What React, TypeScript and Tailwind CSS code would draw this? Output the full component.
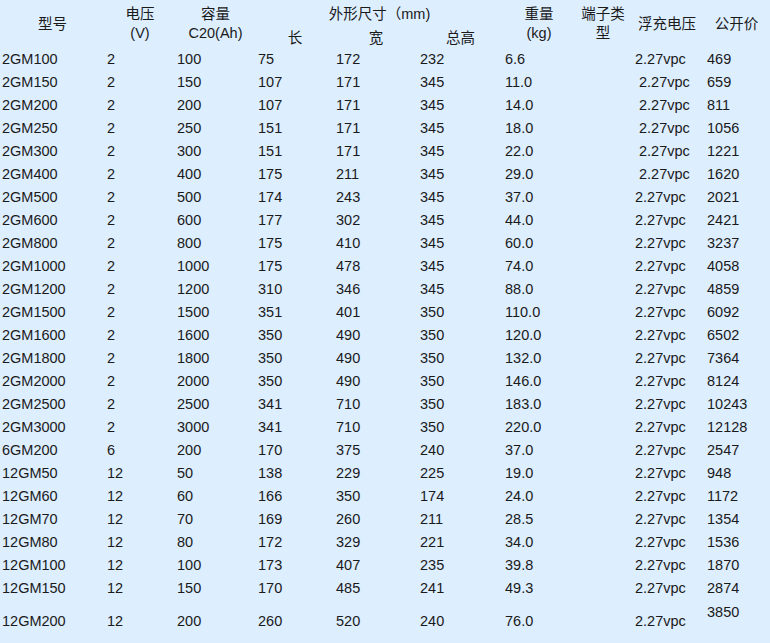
import React from "react";

type Row = [string, string, string, string, string, string, string, string, string, boolean?];

const rows: Row[] = [
  ["2GM100", "2", "100", "75", "172", "232", "6.6", "2.27vpc", "469"],
  ["2GM150", "2", "150", "107", "171", "345", "11.0", "2.27vpc", "659", true],
  ["2GM200", "2", "200", "107", "171", "345", "14.0", "2.27vpc", "811", true],
  ["2GM250", "2", "250", "151", "171", "345", "18.0", "2.27vpc", "1056", true],
  ["2GM300", "2", "300", "151", "171", "345", "22.0", "2.27vpc", "1221", true],
  ["2GM400", "2", "400", "175", "211", "345", "29.0", "2.27vpc", "1620", true],
  ["2GM500", "2", "500", "174", "243", "345", "37.0", "2.27vpc", "2021"],
  ["2GM600", "2", "600", "177", "302", "345", "44.0", "2.27vpc", "2421"],
  ["2GM800", "2", "800", "175", "410", "345", "60.0", "2.27vpc", "3237"],
  ["2GM1000", "2", "1000", "175", "478", "345", "74.0", "2.27vpc", "4058"],
  ["2GM1200", "2", "1200", "310", "346", "345", "88.0", "2.27vpc", "4859"],
  ["2GM1500", "2", "1500", "351", "401", "350", "110.0", "2.27vpc", "6092"],
  ["2GM1600", "2", "1600", "350", "490", "350", "120.0", "2.27vpc", "6502"],
  ["2GM1800", "2", "1800", "350", "490", "350", "132.0", "2.27vpc", "7364"],
  ["2GM2000", "2", "2000", "350", "490", "350", "146.0", "2.27vpc", "8124"],
  ["2GM2500", "2", "2500", "341", "710", "350", "183.0", "2.27vpc", "10243"],
  ["2GM3000", "2", "3000", "341", "710", "350", "220.0", "2.27vpc", "12128"],
  ["6GM200", "6", "200", "170", "375", "240", "37.0", "2.27vpc", "2547"],
  ["12GM50", "12", "50", "138", "229", "225", "19.0", "2.27vpc", "948"],
  ["12GM60", "12", "60", "166", "350", "174", "24.0", "2.27vpc", "1172"],
  ["12GM70", "12", "70", "169", "260", "211", "28.5", "2.27vpc", "1354"],
  ["12GM80", "12", "80", "172", "329", "221", "34.0", "2.27vpc", "1536"],
  ["12GM100", "12", "100", "173", "407", "235", "39.8", "2.27vpc", "1870"],
  ["12GM150", "12", "150", "170", "485", "241", "49.3", "2.27vpc", "2874"],
];

const cols = "grid grid-cols-[105px_70px_81px_78px_84px_85px_72px_56px_72px_67px]";

function DataRow({ r }: { r: Row }) {
  return (
    <div className={`${cols} h-[23px] items-center whitespace-nowrap`}>
      <div className="pl-[2px]">{r[0]}</div>
      <div className="pl-[2px]">{r[1]}</div>
      <div className="pl-[2px]">{r[2]}</div>
      <div className="pl-[2px]">{r[3]}</div>
      <div className="pl-[2px]">{r[4]}</div>
      <div className="pl-[2px]">{r[5]}</div>
      <div className="pl-[2px]">{r[6]}</div>
      <div></div>
      <div className={r[9] ? "pl-[8px]" : "pl-[4px]"}>{r[7]}</div>
      <div className="pl-[4px]">{r[8]}</div>
    </div>
  );
}

export default function App() {
  return (
    <div
      className="w-[770px] h-[643px] bg-[#ddeeff] text-[#1a1a1a] text-[14.5px] leading-[19px] overflow-hidden"
      style={{ fontFamily: '"Liberation Sans", "Noto Sans CJK SC", sans-serif' }}
    >
      <div className={`${cols} grid-rows-[28px_20px] h-[48px] text-center`}>
        <div className="row-span-2 flex items-center justify-center">型号</div>
        <div className="row-span-2 flex flex-col items-center justify-center">
          <span>电压</span>
          <span>(V)</span>
        </div>
        <div className="row-span-2 flex flex-col items-center justify-center">
          <span>容量</span>
          <span>C20(Ah)</span>
        </div>
        <div className="col-span-3 flex items-center justify-center whitespace-nowrap">外形尺寸（mm)</div>
        <div className="row-span-2 col-start-7 row-start-1 flex flex-col items-center justify-center">
          <span>重量</span>
          <span>(kg)</span>
        </div>
        <div className="row-span-2 col-start-8 row-start-1 flex flex-col items-center justify-center">
          <span>端子类</span>
          <span>型</span>
        </div>
        <div className="row-span-2 col-start-9 row-start-1 flex items-center justify-center">浮充电压</div>
        <div className="row-span-2 col-start-10 row-start-1 flex items-center justify-center">公开价</div>
        <div className="col-start-4 row-start-2 flex items-center justify-center">长</div>
        <div className="col-start-5 row-start-2 flex items-center justify-center">宽</div>
        <div className="col-start-6 row-start-2 flex items-center justify-center">总高</div>
      </div>
      {rows.map((r) => (
        <DataRow key={r[0]} r={r} />
      ))}
      <div className={`${cols} h-[43px] items-center whitespace-nowrap`}>
        <div className="pl-[2px]">12GM200</div>
        <div className="pl-[2px]">12</div>
        <div className="pl-[2px]">200</div>
        <div className="pl-[2px]">260</div>
        <div className="pl-[2px]">520</div>
        <div className="pl-[2px]">240</div>
        <div className="pl-[2px]">76.0</div>
        <div></div>
        <div className="pl-[4px]">2.27vpc</div>
        <div className="pl-[4px] flex flex-col">
          <span>3850</span>
          <span>&nbsp;</span>
        </div>
      </div>
    </div>
  );
}
